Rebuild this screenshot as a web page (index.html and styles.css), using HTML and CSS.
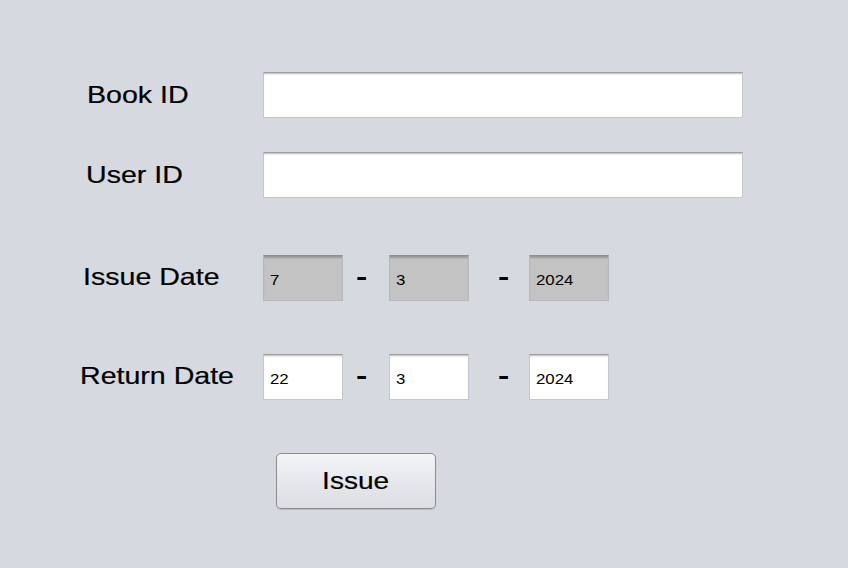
FILE: index.html
```html
<!DOCTYPE html>
<html lang="en">
<head>
  <meta charset="UTF-8" />
  <title>Issue Book</title>
  <link rel="stylesheet" href="styles.css">
</head>
<body>

<div class="issue-form">
  <div class="row row-book">
    <label class="label"><span>Book ID</span></label>
    <div class="field wide"></div>
  </div>

  <div class="row row-user">
    <label class="label"><span>User ID</span></label>
    <div class="field wide"></div>
  </div>

  <div class="row row-issue">
    <label class="label"><span>Issue Date</span></label>
    <div class="field small locked"><span>7</span></div>
    <div class="sep sep-first"><span>-</span></div>
    <div class="field small locked"><span>3</span></div>
    <div class="sep sep-second"><span>-</span></div>
    <div class="field small locked"><span>2024</span></div>
  </div>

  <div class="row row-return">
    <label class="label"><span>Return Date</span></label>
    <div class="field small"><span>22</span></div>
    <div class="sep sep-first"><span>-</span></div>
    <div class="field small"><span>3</span></div>
    <div class="sep sep-second"><span>-</span></div>
    <div class="field small"><span>2024</span></div>
  </div>

  <div class="actions">
    <button class="btn-issue"><span>Issue</span></button>
  </div>
</div>

</body>
</html>
```

FILE: styles.css
```css
body {
    font-family: "Liberation Sans", Arial, sans-serif;
    background-color: #d6d9e0;
    margin: 0;
    width: 848px;
    height: 568px;
    overflow: hidden;
    color: #000;
}

.issue-form {
    display: flex;
    flex-direction: column;
    padding-top: 72px;
}

.row {
    display: flex;
    align-items: center;
}

.row-user {
    margin-top: 34px;
}

.row-issue {
    margin-top: 57px;
}

.row-return {
    margin-top: 53px;
}

.label {
    width: 263px;
    flex-shrink: 0;
    box-sizing: border-box;
    font-size: 24px;
    line-height: 28px;
    -webkit-text-stroke: 0.2px #000;
}

.label span {
    display: inline-block;
    transform: scaleX(1.19);
    transform-origin: left center;
}

.row-book .label { padding-left: 87px; }
.row-user .label { padding-left: 86px; }
.row-issue .label { padding-left: 83px; margin-top: -3px; }
.row-return .label { padding-left: 80px; margin-top: -3px; }

.field {
    box-sizing: border-box;
    background-color: #fff;
    border: 1px solid #c3c6cb;
    border-top-color: #9c9ea2;
    box-shadow: inset 0 2px 2px -1px rgba(0, 0, 0, 0.28);
    display: flex;
    align-items: center;
}

.field.wide {
    width: 480px;
    height: 46px;
}

.field.small {
    width: 80px;
    height: 46px;
    padding-left: 6px;
    font-size: 15px;
}

.field.small span {
    display: inline-block;
    transform: scaleX(1.12);
    transform-origin: left center;
    margin-top: 3px;
}

.field.locked {
    background-color: #c3c3c3;
    border-color: #b6b8bc;
    border-top-color: #8e8e8e;
    box-shadow: inset 0 3px 2px -1px rgba(0, 0, 0, 0.22);
}

.sep {
    font-size: 26px;
    font-weight: bold;
    line-height: 26px;
    margin-top: -4px;
}

.sep span {
    display: inline-block;
    transform: scaleX(1.3);
    transform-origin: left center;
}

.sep-first {
    width: 46px;
    padding-left: 13px;
    box-sizing: border-box;
}

.sep-second {
    width: 60px;
    padding-left: 29px;
    box-sizing: border-box;
}

.actions {
    margin-top: 53px;
    padding-left: 276px;
}

.btn-issue {
    width: 160px;
    height: 56px;
    font-family: "Liberation Sans", Arial, sans-serif;
    font-size: 24px;
    color: #000;
    -webkit-text-stroke: 0.2px #000;
    border: 1px solid #8a8c90;
    border-radius: 5px;
    background: linear-gradient(#f4f5f7, #e4e6ea 55%, #dcdfe4);
    box-shadow: 0 1px 1px rgba(0, 0, 0, 0.15);
    padding: 0;
    cursor: pointer;
}

.btn-issue span {
    display: inline-block;
    transform: scaleX(1.17);
}
```
